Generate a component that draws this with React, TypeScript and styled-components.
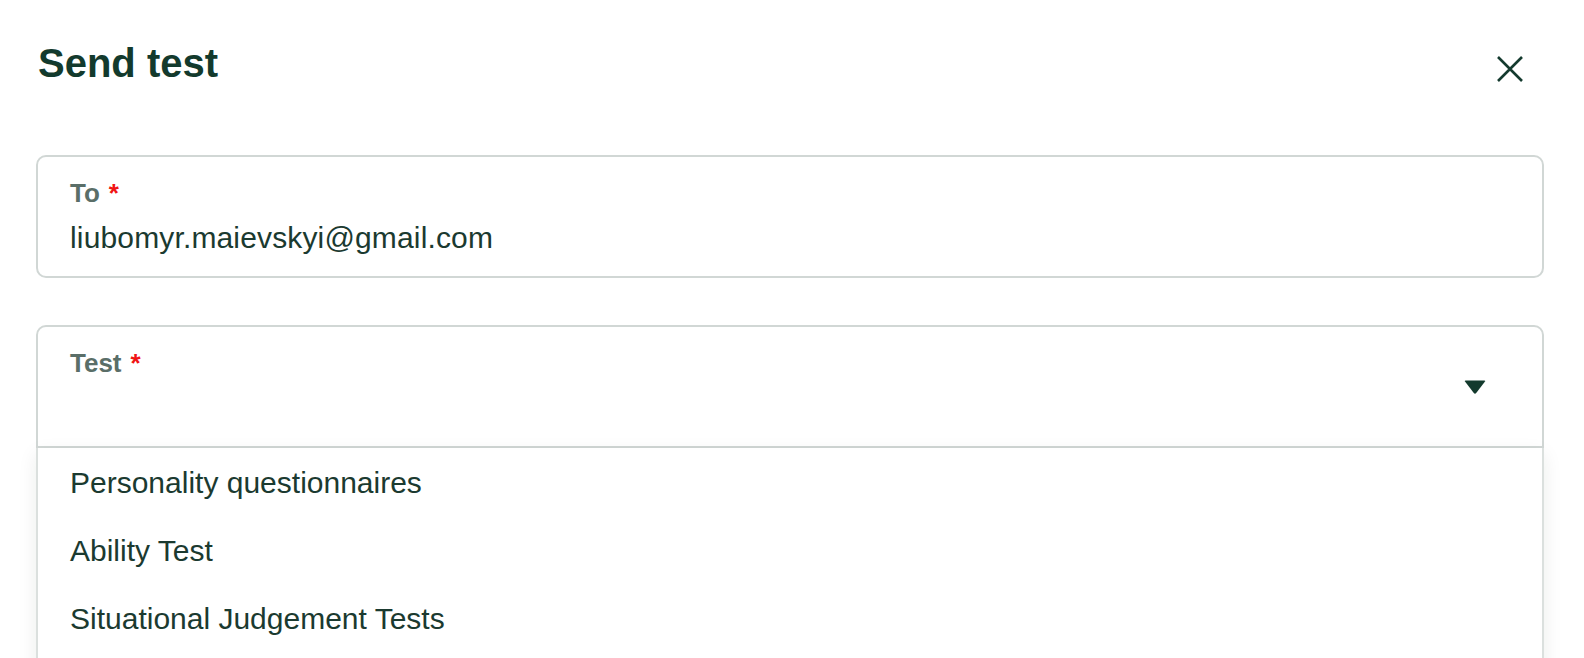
import React from "react";
import styled, { createGlobalStyle } from "styled-components";

const GlobalStyle = createGlobalStyle`
  html, body {
    margin: 0;
    padding: 0;
    background: #ffffff;
    overflow: hidden;
  }
  body {
    font-family: "Liberation Sans", Arial, sans-serif;
    color: #1b3a30;
  }
  * { box-sizing: border-box; }
`;

const Page = styled.div`
  padding: 39px 40px 0 36px;
  height: 658px;
`;

const Header = styled.header`
  display: flex;
  justify-content: space-between;
  align-items: flex-start;
  height: 48px;
`;

const Title = styled.h2`
  margin: 0 0 0 2px;
  font-size: 40px;
  line-height: 48px;
  font-weight: 700;
  color: #133a2d;
  letter-spacing: 0;
`;

const CloseButton = styled.button`
  width: 48px;
  height: 48px;
  margin-top: 6px;
  margin-right: 10px;
  padding: 0;
  border: none;
  background: transparent;
  display: flex;
  align-items: center;
  justify-content: center;
  color: #143a2e;
  cursor: pointer;
`;

const Form = styled.div`
  margin-top: 68px;
  display: flex;
  flex-direction: column;
  gap: 47px;
`;

const Field = styled.div<{ $open?: boolean }>`
  display: flex;
  align-items: center;
  border: 2px solid #d1d7d5;
  border-radius: ${(p) => (p.$open ? "10px 10px 0 0" : "10px")};
  padding: 21px 32px 20px;
  background: #fff;
`;

const FieldBody = styled.div`
  flex: 1;
  display: flex;
  flex-direction: column;
  gap: 12px;
`;

const Label = styled.div`
  font-size: 26px;
  line-height: 30px;
  font-weight: 700;
  color: #5a6e68;
`;

const Required = styled.span`
  color: #f01414;
  margin-left: 9px;
`;

const Value = styled.div`
  font-size: 30px;
  line-height: 36px;
  height: 36px;
  letter-spacing: 0.15px;
  color: #1b3a30;
`;

const Arrow = styled.span`
  display: flex;
  margin-right: 24px;
  color: #133a2d;
`;

const SelectWrap = styled.div`
  position: relative;
`;

const Menu = styled.ul`
  position: absolute;
  top: 100%;
  left: 0;
  right: 0;
  margin: 0;
  padding: 1px 0 22px;
  list-style: none;
  background: #fff;
  border-left: 2px solid #dbe0de;
  border-right: 2px solid #dbe0de;
  box-shadow: 0 6px 18px rgba(20, 40, 30, 0.08);
`;

const MenuItem = styled.li`
  padding: 16px 32px;
  font-size: 30px;
  line-height: 36px;
  color: #1b3a30;
`;

const tests = [
  "Personality questionnaires",
  "Ability Test",
  "Situational Judgement Tests",
];

export default function App() {
  return (
    <>
      <GlobalStyle />
      <Page>
        <Header>
          <Title>Send test</Title>
          <CloseButton aria-label="Close">
            <svg width="28" height="28" viewBox="0 0 28 28" fill="none">
              <path
                d="M2 2 L26 26 M26 2 L2 26"
                stroke="currentColor"
                strokeWidth="2.6"
                strokeLinecap="butt"
              />
            </svg>
          </CloseButton>
        </Header>
        <Form>
          <Field>
            <FieldBody>
              <Label>
                To<Required>*</Required>
              </Label>
              <Value>liubomyr.maievskyi@gmail.com</Value>
            </FieldBody>
          </Field>
          <SelectWrap>
            <Field $open>
              <FieldBody>
                <Label>
                  Test<Required>*</Required>
                </Label>
                <Value />
              </FieldBody>
              <Arrow>
                <svg width="22" height="14" viewBox="0 0 22 14">
                  <path
                    d="M1.5 0.5 H20.5 Q21.8 0.5 21 1.6 L12.2 13 Q11 14.3 9.8 13 L1 1.6 Q0.2 0.5 1.5 0.5 Z"
                    fill="currentColor"
                  />
                </svg>
              </Arrow>
            </Field>
            <Menu>
              {tests.map((t) => (
                <MenuItem key={t}>{t}</MenuItem>
              ))}
            </Menu>
          </SelectWrap>
        </Form>
      </Page>
    </>
  );
}
